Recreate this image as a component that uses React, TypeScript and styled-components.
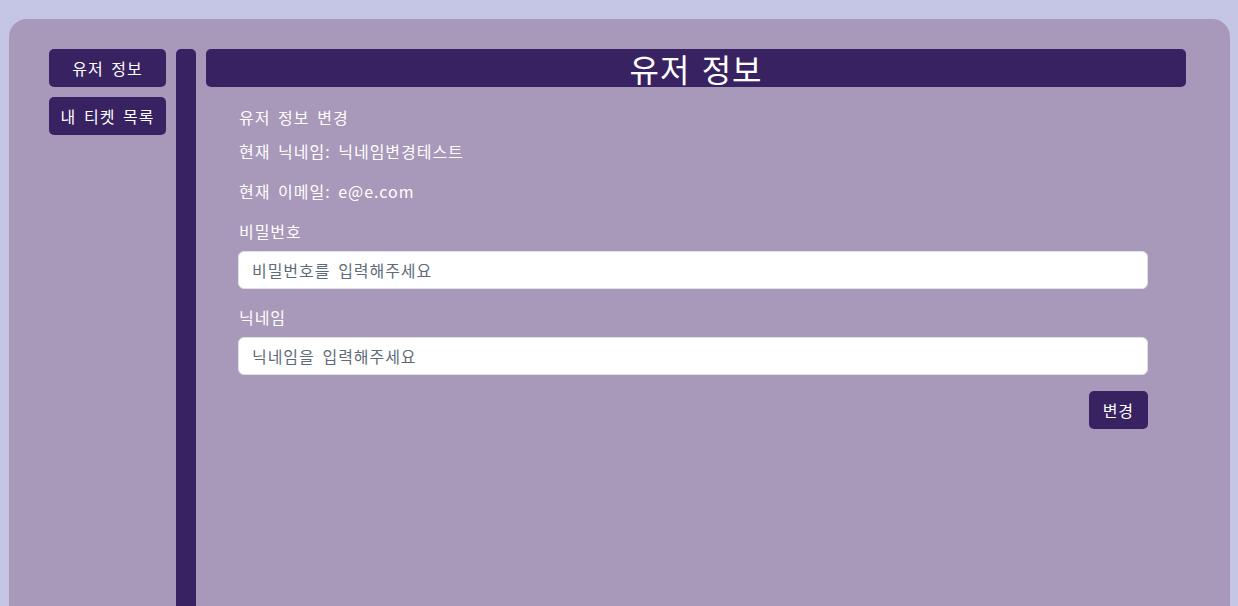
import styled, { createGlobalStyle } from 'styled-components';

const GlobalStyle = createGlobalStyle`
  body {
    margin: 0;
    background: #c5c6e6;
    font-family: "Noto Sans CJK KR", "Noto Sans", sans-serif;
    letter-spacing: 0.06em;
    word-spacing: 0.2em;
    color: #fff;
  }
`

const Page = styled.div`
  padding: 19px 8px 0 9px;
`

const Card = styled.div`
  display: flex;
  gap: 10px;
  min-height: 640px;
  padding: 30px 44px 0 40px;
  background: #a898b9;
  border-radius: 18px 18px 0 0;
`

const Sidebar = styled.nav`
  display: flex;
  flex-direction: column;
  gap: 10px;
  width: 117px;
`

const SideButton = styled.button`
  height: 38px;
  padding: 0;
  border: none;
  border-radius: 5px;
  background: #382262;
  color: #fff;
  font-family: inherit;
  font-size: 16px;
  letter-spacing: inherit;
  word-spacing: inherit;
  cursor: pointer;
`

const Divider = styled.div`
  width: 20px;
  background: #382262;
  border-radius: 5px 5px 0 0;
`

const Main = styled.main`
  flex: 1;
`

const Header = styled.h1`
  margin: 0;
  height: 38px;
  background: #382262;
  border-radius: 5px;
  font-size: 32px;
  font-weight: 400;
  line-height: 38px;
  text-align: center;
`

const Form = styled.div`
  display: flex;
  flex-direction: column;
  padding: 19px 38px 0 32px;
`

const Heading = styled.h2`
  margin: -1px 0 10px 1px;
  font-size: 16px;
  font-weight: 400;
  line-height: 24px;
`

const Info = styled.p`
  margin: 0 0 16px 1px;
  font-size: 16px;
  line-height: 24px;
`

const Label = styled.label`
  margin: 0 0 8px 1px;
  font-size: 16px;
  line-height: 24px;
`

const Input = styled.input`
  box-sizing: border-box;
  height: 38px;
  margin-bottom: 16px;
  padding: 6px 13px;
  border: 1px solid #dee2e6;
  border-radius: 6px;
  background: #fff;
  font-family: inherit;
  font-size: 16px;
  letter-spacing: inherit;
  word-spacing: inherit;

  &::placeholder {
    color: #5f6b78;
  }
`

const Actions = styled.div`
  display: flex;
  justify-content: flex-end;
`

const SubmitButton = styled.button`
  height: 38px;
  padding: 0 14px;
  border: none;
  border-radius: 5px;
  background: #382262;
  color: #fff;
  font-family: inherit;
  font-size: 16px;
  letter-spacing: inherit;
  cursor: pointer;
`

export default function App() {
  return (
    <>
      <GlobalStyle />
      <Page>
        <Card>
          <Sidebar>
            <SideButton>유저 정보</SideButton>
            <SideButton>내 티켓 목록</SideButton>
          </Sidebar>
          <Divider />
          <Main>
            <Header>유저 정보</Header>
            <Form>
              <Heading>유저 정보 변경</Heading>
              <Info>현재 닉네임: 닉네임변경테스트</Info>
              <Info>현재 이메일: e@e.com</Info>
              <Label>비밀번호</Label>
              <Input type="password" placeholder="비밀번호를 입력해주세요" />
              <Label>닉네임</Label>
              <Input type="text" placeholder="닉네임을 입력해주세요" />
              <Actions>
                <SubmitButton>변경</SubmitButton>
              </Actions>
            </Form>
          </Main>
        </Card>
      </Page>
    </>
  );
}
